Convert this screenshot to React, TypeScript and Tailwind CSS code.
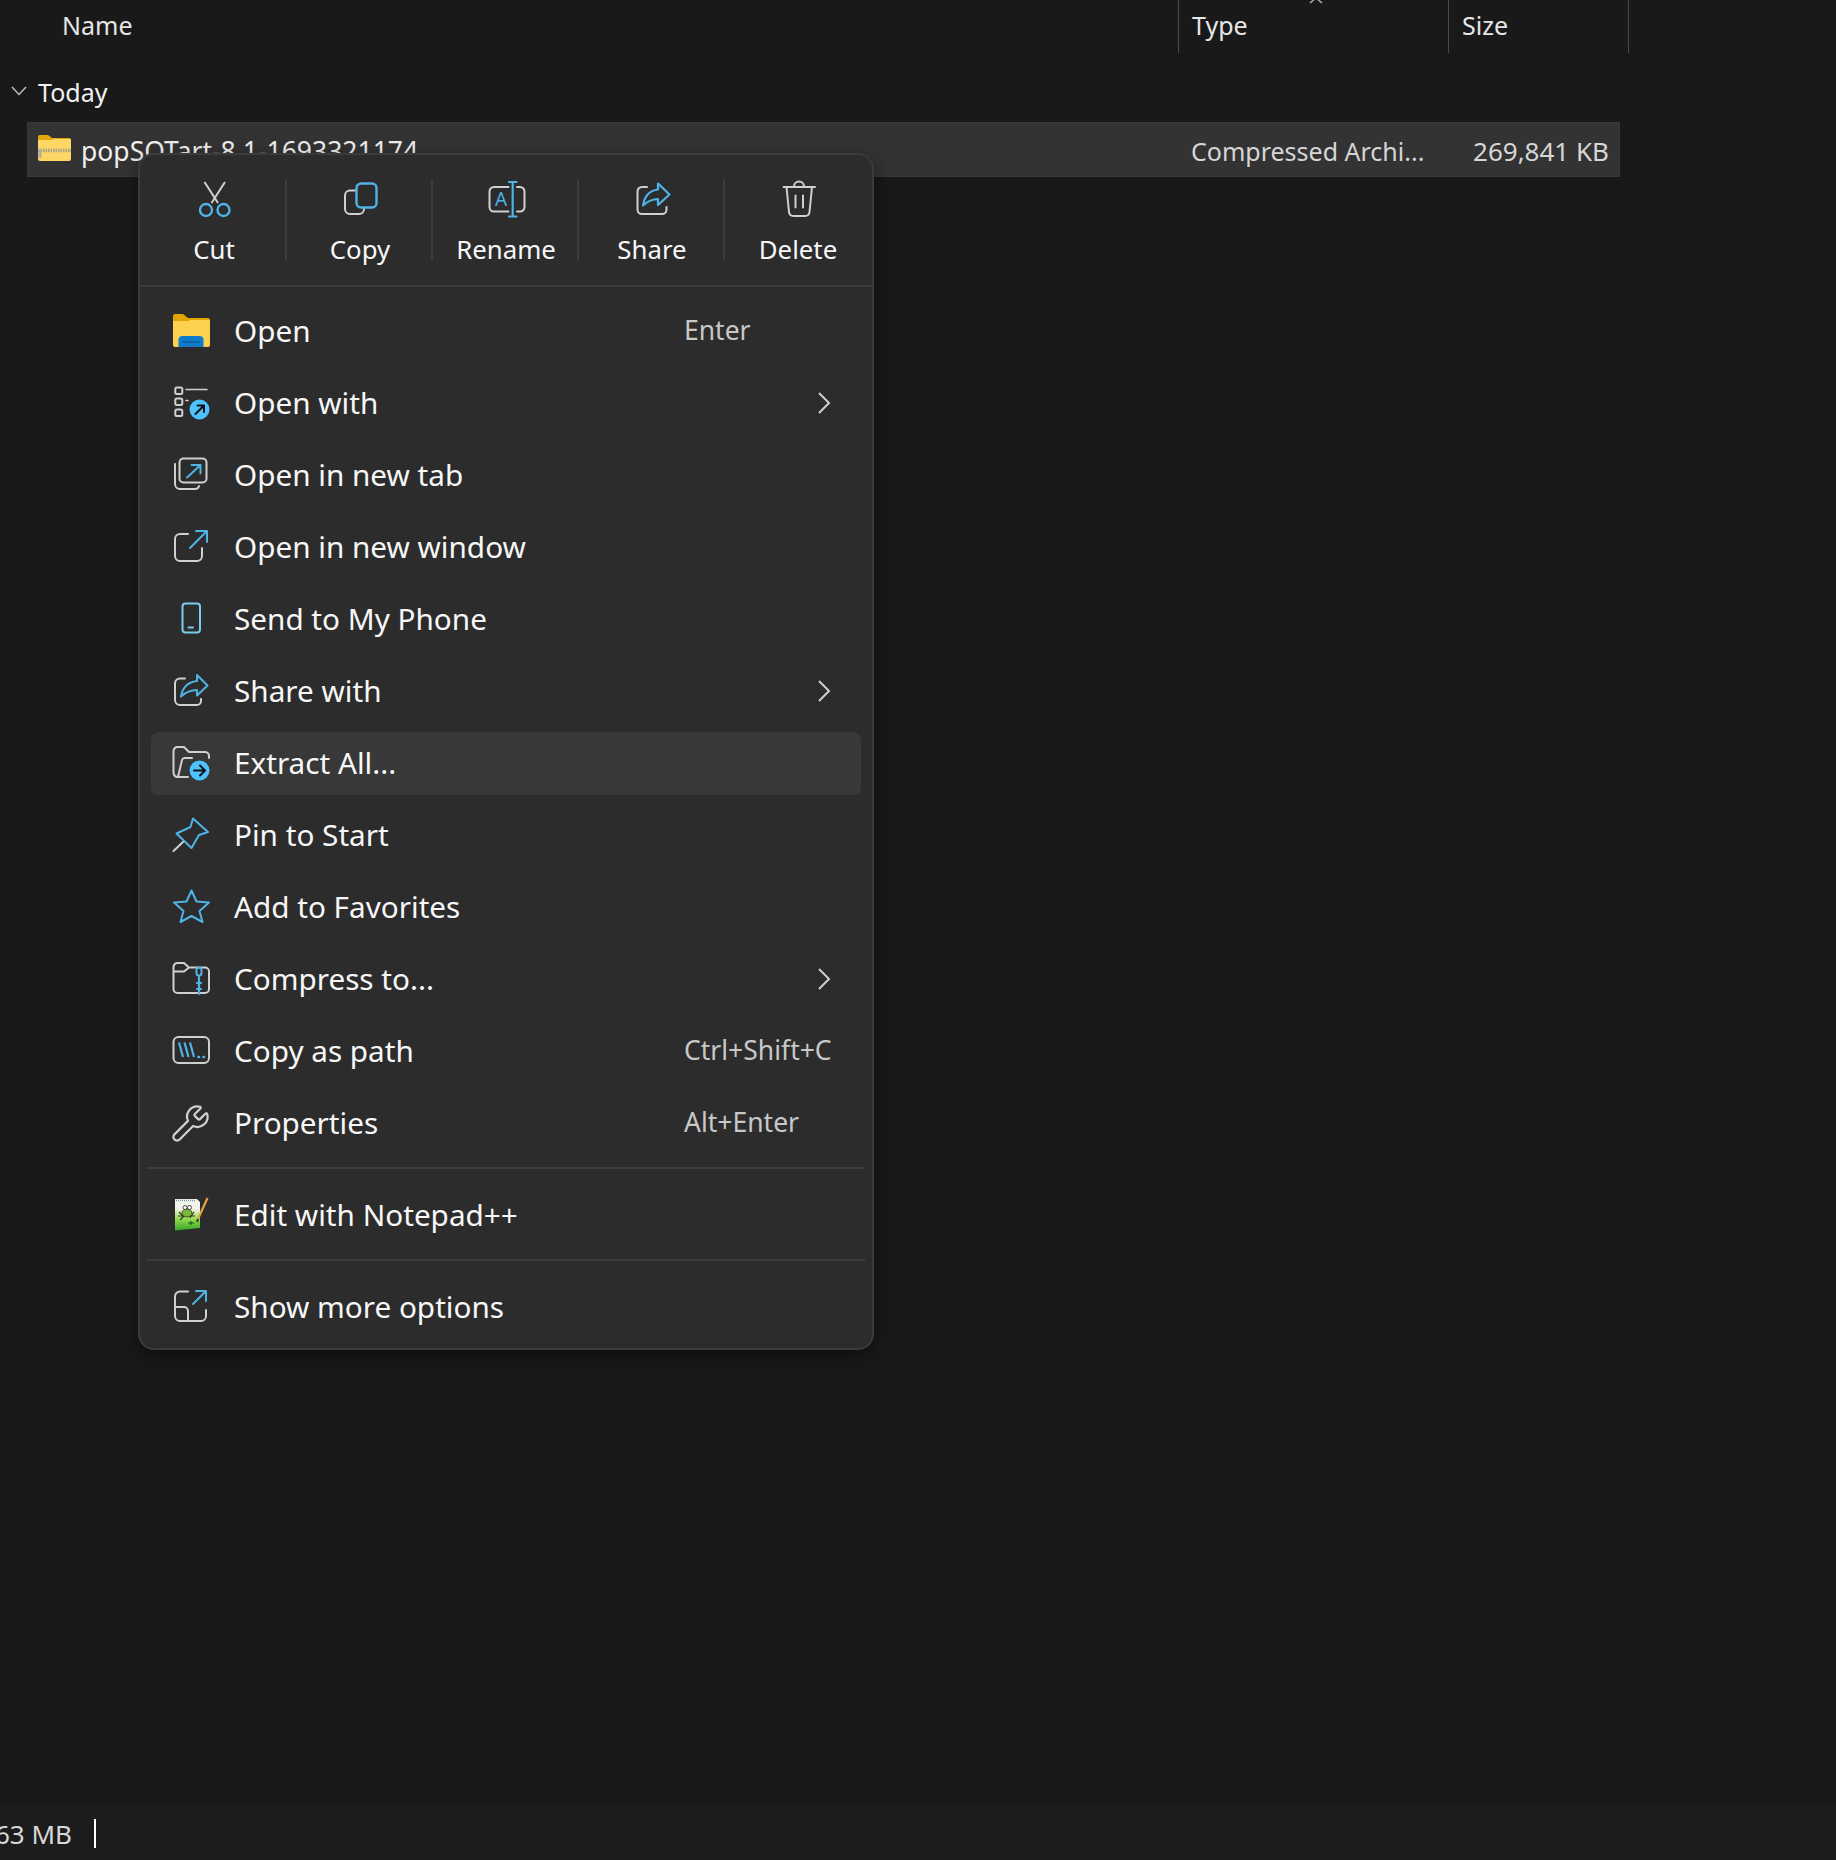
import type { ReactNode } from "react";
import { Wrench } from "lucide-react";

const BLUE = "#4fb3e6";
const GREY = "#d0d0d0";

const Svg = ({ children }: { children: ReactNode }) => (
  <svg width="36" height="36" viewBox="0 0 36 36" fill="none" strokeWidth="2" strokeLinecap="round" strokeLinejoin="round" className="shrink-0 overflow-visible">
    {children}
  </svg>
);

const CutIcon = () => (
  <Svg>
    <path d="M8.500 1 L22 22 M29 1 L15.500 22" stroke={GREY} strokeLinecap="butt" />
    <circle cx="10" cy="29" r="6" stroke={BLUE} strokeWidth="2.400" />
    <circle cx="27.500" cy="29" r="6" stroke={BLUE} strokeWidth="2.400" />
  </Svg>
);

const CopyIcon = () => (
  <Svg>
    <path d="M14 9.500 H8 a5 5 0 0 0 -5 5 V28 a5 5 0 0 0 5 5 H17 a5 5 0 0 0 5 -5" stroke={GREY} />
    <rect x="14.500" y="2.500" width="20" height="24" rx="4.500" stroke={BLUE} strokeWidth="2.400" />
  </Svg>
);

const RenameIcon = () => (
  <Svg>
    <path d="M20.500 6 H6 a4.500 4.500 0 0 0 -4.500 4.500 V26 a4.500 4.500 0 0 0 4.500 4.500 H20.500 M29 6 H32 a4.500 4.500 0 0 1 4.500 4.500 V26 a4.500 4.500 0 0 1 -4.500 4.500 H29" stroke={GREY} />
    <path d="M24.700 1 V35.500 M21 1 H28.500 M21 35.500 H28.500" stroke={BLUE} strokeWidth="2.200" />
    <text x="7" y="25" fontSize="19" fill={BLUE} fontFamily="Noto Sans, sans-serif">A</text>
  </Svg>
);

const ShareIcon = () => (
  <Svg>
    <path d="M13 6 H8 a4.500 4.500 0 0 0 -4.500 4.500 V28.500 a4.500 4.500 0 0 0 4.500 4.500 H28 a4.500 4.500 0 0 0 4.500 -4.500 V26" stroke={GREY} />
    <path d="M24 2.500 L35.500 13.500 L24 24 V18 C18 18 14 20 9 24.500 C10.500 15 16 9.500 24 8.500 Z" stroke={BLUE} strokeWidth="2.200" />
  </Svg>
);

const DeleteIcon = () => (
  <Svg>
    <path d="M3.500 6 H35 M6.500 6 L9 31 a4.500 4.500 0 0 0 4.500 4 H25 a4.500 4.500 0 0 0 4.500 -4 L32 6 M14 5.500 a5 5 0 0 1 10 0" stroke={GREY} />
    <path d="M15.500 14.500 V26.500 M23 14.500 V26.500" stroke={GREY} />
  </Svg>
);

const FolderOpenIcon = () => (
  <Svg>
    <path d="M1 3 a2 2 0 0 1 2 -2 H11 L16 5 H36 a2 2 0 0 1 2 2 V8 H1 Z" fill="#e0a500" />
    <path d="M1 8 H16 L18 7 H38 V32 a2 2 0 0 1 -2 2 H3 a2 2 0 0 1 -2 -2 Z" fill="#fbd14f" />
    <path d="M6.500 34 V27 a4 4 0 0 1 4 -4 H27.500 a4 4 0 0 1 4 4 V34 Z" fill="#0f7ccb" />
    <path d="M11 29 H27" stroke="#0a5a9e" strokeWidth="1.600" />
  </Svg>
);

const OpenWithIcon = () => (
  <Svg>
    <rect x="3.300" y="2.500" width="7" height="6.500" rx="1.500" stroke={GREY} />
    <rect x="3.300" y="13.500" width="7" height="6.500" rx="1.500" stroke={GREY} />
    <rect x="3.300" y="24.500" width="7" height="6.500" rx="1.500" stroke={GREY} />
    <path d="M14 4.500 H35 M14 15.500 H16" stroke={GREY} strokeWidth="1.600" />
    <circle cx="27.500" cy="24.500" r="10" fill="#4cc2ff" />
    <path d="M23.500 29 L31.500 21 M25.500 20.500 H32 V27" stroke="#111" strokeWidth="2" />
  </Svg>
);

const NewTabIcon = () => (
  <Svg>
    <g transform="translate(1 0)">
      <rect x="6.500" y="1.500" width="27" height="24" rx="4" stroke={GREY} />
      <path d="M2 7 V27 a5 5 0 0 0 5 5 H22 a4 4 0 0 0 4 -3" stroke={GREY} />
      <path d="M14 20.500 L27 8.500 M18.500 8 H27.500 V16.500" stroke={BLUE} />
    </g>
  </Svg>
);

const NewWindowIcon = () => (
  <Svg>
    <g transform="translate(1 0)">
      <path d="M15 5 H7 a5 5 0 0 0 -5 5 V27 a5 5 0 0 0 5 5 H24 a5 5 0 0 0 5 -5 V19" stroke={GREY} />
      <path d="M17 19 L34 2 M23 2 H34 V13" stroke={BLUE} />
    </g>
  </Svg>
);

const PhoneIcon = () => (
  <Svg>
    <rect x="10.500" y="2.500" width="17.500" height="29" rx="3" stroke="#7accec" />
    <path d="M16.500 26.500 H21" stroke="#7accec" />
  </Svg>
);

const ShareWithIcon = () => (
  <Svg>
    <g transform="translate(1 0)">
      <path d="M12 5.500 H7 a5 5 0 0 0 -5 5 V27 a5 5 0 0 0 5 5 H24 a4 4 0 0 0 4 -4 V26" stroke={GREY} />
      <path d="M24 2 L34.500 12.500 L24 22.500 V17 C18 17 13 19 8 23.500 C9.500 14.500 15.500 9 24 8 Z" stroke={BLUE} />
    </g>
  </Svg>
);

const ExtractIcon = () => (
  <Svg>
    <path d="M1.500 27 V6 a4 4 0 0 1 4 -4 H12 L17 7 H33 a4 4 0 0 1 4 4 V13 M1.500 27 C1.500 30 3 32 6 32 H16 M6 32 L10 15 a3 3 0 0 1 3 -2 H20" stroke={GREY} />
    <circle cx="27.500" cy="25.500" r="10" fill="#4cc2ff" />
    <path d="M22 25.500 H32.500 M28 20.500 L33 25.500 L28 30.500" stroke="#111" strokeWidth="2" />
  </Svg>
);

const PinIcon = () => (
  <Svg>
    <path d="M21 1.500 L36 15 L27 18 L19.500 31 L4.500 16.500 L18.500 10 Z" stroke={BLUE} />
    <path d="M11 25 L1.500 34" stroke={GREY} />
  </Svg>
);

const StarIcon = () => (
  <Svg>
    <path d="M19.500 1.500 L24.500 12.500 L37 13.500 L27.500 22 L30.500 33 L19.500 27 L8.500 33 L11.500 22 L2 13.500 L14.500 12.500 Z" stroke={BLUE} />
  </Svg>
);

const CompressIcon = () => (
  <Svg>
    <path d="M1.500 28 V6 a4 4 0 0 1 4 -4 H12 L17 6.500 H33 a4 4 0 0 1 4 4 V28 a4 4 0 0 1 -4 4 H5.500 a4 4 0 0 1 -4 -4 Z M1.500 10.500 H12 L17 6.500" stroke={GREY} />
    <path d="M27 15 V33 M25 22 H29 M25 28 H29" stroke={BLUE} strokeWidth="2.200" />
    <rect x="24.500" y="6.500" width="5" height="8" rx="2.500" stroke={BLUE} />
  </Svg>
);

const CopyPathIcon = () => (
  <Svg>
    <rect x="1.500" y="4" width="35.500" height="26" rx="5" stroke={GREY} />
    <path d="M7 9.500 L11 24 M12.500 9.500 L16.500 24 M18 9.500 L22 24" stroke={BLUE} strokeLinecap="butt" strokeWidth="2.200" />
    <path d="M26.500 24 H27 M31.500 24 H32" stroke={BLUE} strokeWidth="2.600" />
  </Svg>
);

const NotepadIcon = () => (
  <svg width="36" height="36" viewBox="0 0 36 36" className="shrink-0 overflow-visible">
    <defs>
      <linearGradient id="npp" x1="0" y1="0" x2="0" y2="1">
        <stop offset="0.3" stopColor="#f2f5ec" />
        <stop offset="0.65" stopColor="#8fd84a" />
        <stop offset="1" stopColor="#35a82a" />
      </linearGradient>
    </defs>
    <path d="M3 2 H25 L28 5 V31 L3 33.500 Z" fill="url(#npp)" />
    <path d="M4 3.500 H24" stroke="#7f8fa6" strokeWidth="1.500" strokeDasharray="1 1" />
    <path d="M6 19 H23 M7 15 L11 19 M22 15 L18 21 M8 23 L12 19" stroke="#3a3a20" strokeWidth="1.200" fill="none" />
    <ellipse cx="15" cy="16" rx="5" ry="4" fill="#7cb93a" stroke="#2e3d1c" strokeWidth="0.800" />
    <circle cx="13" cy="10.500" r="2" fill="#fff" stroke="#222" strokeWidth="0.800" />
    <circle cx="17.500" cy="10.500" r="2" fill="#fff" stroke="#222" strokeWidth="0.800" />
    <path d="M16 26 H22 M19 24 V28" stroke="#1c4d12" strokeWidth="1" />
    <path d="M26 22 L35.500 1" stroke="#e5a33a" strokeWidth="2.200" fill="none" />
    <path d="M25 25 L26 22" stroke="#333" strokeWidth="2" fill="none" />
  </svg>
);

const ShowMoreIcon = () => (
  <Svg>
    <g transform="translate(1 0)">
      <path d="M15 2.500 H7 a5 5 0 0 0 -5 5 V27 a5 5 0 0 0 5 5 H28 a5 5 0 0 0 5 -5 V21 M2 18 H11 a4 4 0 0 1 4 4 V32" stroke={GREY} />
      <path d="M20 15 L33 2 M23 2 H33 V12" stroke={BLUE} />
    </g>
  </Svg>
);

const Chevron = () => (
  <svg width="14" height="24" viewBox="0 0 14 24" fill="none" stroke="#cfcfcf" strokeWidth="2" className="shrink-0">
    <path d="M2 2 L12 12 L2 22" />
  </svg>
);

const ZipFolder = () => (
  <svg width="33" height="26" viewBox="0 0 33 26" className="shrink-0">
    <path d="M0 2 a2 2 0 0 1 2 -2 H10 L14 3 H31 a2 2 0 0 1 2 2 V6 H0 Z" fill="#e4a70c" />
    <path d="M0 5 H14 L16 4 H33 V24 a2 2 0 0 1 -2 2 H2 a2 2 0 0 1 -2 -2 Z" fill="#fdd766" />
    <path d="M0 15.500 H33" stroke="#a8a08a" strokeWidth="3.500" strokeDasharray="1.500 1" />
    <path d="M2 15 V23" stroke="#b0ad9e" strokeWidth="3" />
  </svg>
);

const toolbar = [
  { label: "Cut", icon: <CutIcon /> },
  { label: "Copy", icon: <CopyIcon /> },
  { label: "Rename", icon: <RenameIcon /> },
  { label: "Share", icon: <ShareIcon /> },
  { label: "Delete", icon: <DeleteIcon /> },
];

type Row = { label: string; icon: ReactNode; shortcut?: string; more?: boolean; active?: boolean };

const mainRows: Row[] = [
  { label: "Open", icon: <FolderOpenIcon />, shortcut: "Enter" },
  { label: "Open with", icon: <OpenWithIcon />, more: true },
  { label: "Open in new tab", icon: <NewTabIcon /> },
  { label: "Open in new window", icon: <NewWindowIcon /> },
  { label: "Send to My Phone", icon: <PhoneIcon /> },
  { label: "Share with", icon: <ShareWithIcon />, more: true },
  { label: "Extract All...", icon: <ExtractIcon />, active: true },
  { label: "Pin to Start", icon: <PinIcon /> },
  { label: "Add to Favorites", icon: <StarIcon /> },
  { label: "Compress to...", icon: <CompressIcon />, more: true },
  { label: "Copy as path", icon: <CopyPathIcon />, shortcut: "Ctrl+Shift+C" },
  { label: "Properties", icon: <Wrench size={41} strokeWidth={1.3} color={GREY} className="shrink-0" />, shortcut: "Alt+Enter" },
];

const MenuRow = ({ row }: { row: Row }) => (
  <div className="h-[72px] mx-[11px] flex items-center">
    <div className={`w-full h-[63px] rounded-[7px] flex items-center pl-[21px] ${row.active ? "bg-[#383838]" : ""}`}>
      <div className="w-[36px] h-[36px] flex items-center justify-center">{row.icon}</div>
      <span className="w-[450px] ml-[26px] shrink-0 text-[29.700px] text-[#f7f7f7]">{row.label}</span>
      {row.shortcut && <span className="text-[26.500px] text-[#c8c8c8] whitespace-nowrap">{row.shortcut}</span>}
      {row.more && <span className="ml-[133px]"><Chevron /></span>}
    </div>
  </div>
);

export default function App() {
  return (
    <div className="relative w-[1836px] h-[1860px] overflow-hidden bg-[#191919] flex flex-col font-['Noto_Sans',sans-serif] text-[#e6e6e6]">
      {/* Column header */}
      <div className="h-[53px] flex text-[25px]">
        <div className="w-[1179px] pl-[62px] pt-[7px] border-r border-[#4a4a4a]">Name</div>
        <div className="relative w-[270px] pl-[13px] pt-[7px] border-r border-[#4a4a4a]">
          Type
          <svg width="14" height="4" viewBox="0 0 14 4" fill="none" stroke="#aaaaaa" strokeWidth="1.500" className="absolute top-0 left-[130px]">
            <path d="M1 3 L7 -2 L13 3" />
          </svg>
        </div>
        <div className="w-[180px] pl-[13px] pt-[7px] border-r border-[#4a4a4a]">Size</div>
      </div>

      {/* Group */}
      <div className="h-[69px] flex items-center pl-[11px] pt-[10px]">
        <svg width="16" height="10" viewBox="0 0 16 10" fill="none" stroke="#bdbdbd" strokeWidth="1.500" className="-mt-[3px]">
          <path d="M1 1 L8 8.500 L15 1" />
        </svg>
        <span className="ml-[11px] text-[25px] text-[#f0f0f0]">Today</span>
      </div>

      {/* Selected file */}
      <div className="ml-[27px] w-[1593px] h-[55px] bg-[#333333] flex items-center text-[26px] border border-[#383838]">
        <div className="ml-[10px] -mt-[3px]"><ZipFolder /></div>
        <span className="ml-[10px] mt-[5px] w-[1110px] shrink-0 text-[26.500px] text-[#f0f0f0]">popSQTart-8.1-1693321174</span>
        <span className="w-[238px] mt-[4px] shrink-0 text-[25px] text-[#d6d6d6] whitespace-nowrap">Compressed Archi...</span>
        <span className="w-[180px] mt-[4px] text-right text-[#d6d6d6] whitespace-nowrap">269,841 KB</span>
      </div>

      {/* Status bar */}
      <div className="mt-auto h-[57px] bg-[#1c1c1c] flex items-center text-[26px] text-[#d8d8d8]">
        <span className="-ml-[5px] mt-[6px] whitespace-nowrap">63 MB</span>
        <div className="ml-[22px] mt-[3px] w-[2px] h-[29px] bg-white" />
      </div>

      {/* Context menu */}
      <div className="absolute left-[138px] top-[153px] w-[736px] h-[1197px] rounded-[16px] bg-[#2c2c2c] border-2 border-[#3b3b3b] shadow-[0_6px_20px_rgba(0,0,0,0.45)]">
        <div className="h-[130px] px-[1px] flex border-b-2 border-[#3b3b3b] box-content">
          {toolbar.map((item, i) => (
            <div key={item.label} className="relative w-[146px] flex flex-col items-center pt-[26px]">
              {item.icon}
              <span className="mt-[13px] text-[25.800px] text-[#f7f7f7]">{item.label}</span>
              {i < 4 && <div className="absolute right-0 top-[24px] w-[2px] h-[81px] bg-[#3d3d3d]" />}
            </div>
          ))}
        </div>
        <div className="pt-[8px]">
          {mainRows.map((row) => (
            <MenuRow key={row.label} row={row} />
          ))}
        </div>
        <div className="mx-[7px] mt-[8px] mb-[10px] h-[2px] bg-[#3d3d3d]" />
        <MenuRow row={{ label: "Edit with Notepad++", icon: <NotepadIcon /> }} />
        <div className="mx-[7px] mt-[8px] mb-[10px] h-[2px] bg-[#3d3d3d]" />
        <MenuRow row={{ label: "Show more options", icon: <ShowMoreIcon /> }} />
      </div>
    </div>
  );
}
